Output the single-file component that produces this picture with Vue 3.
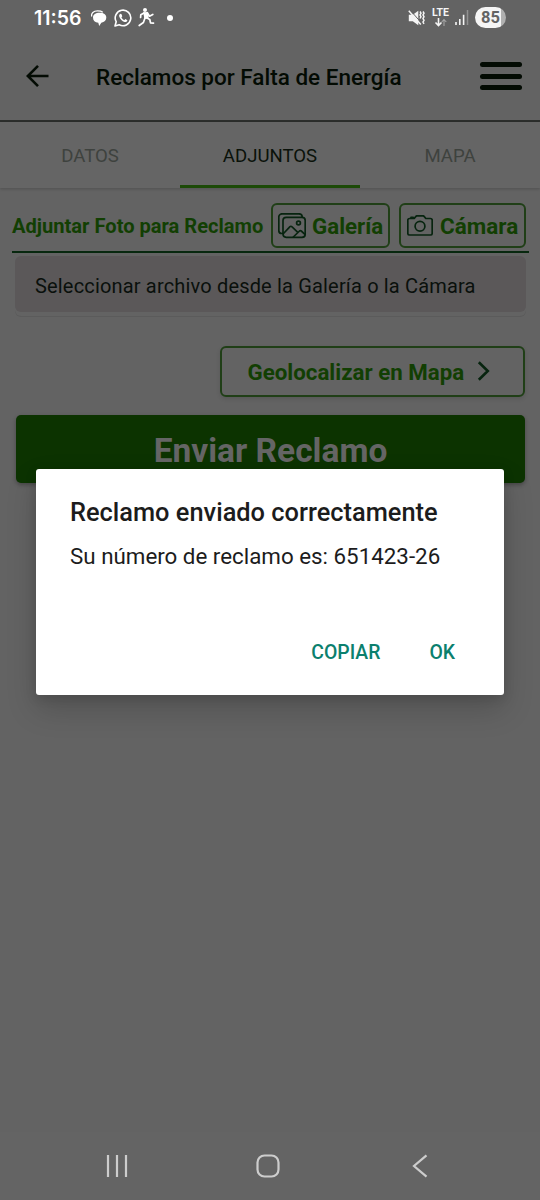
<script setup>
const tabs = [
  { label: 'DATOS', active: false },
  { label: 'ADJUNTOS', active: true },
  { label: 'MAPA', active: false },
]
</script>

<template>
  <div class="screen">
    <div class="status">
      <span class="clock">11:56</span>
      <svg class="chat" width="16" height="17" viewBox="0 0 16 17">
        <path d="M.7 6.500C0 3.300 2.500.9 6.500.9c2.600 0 4.200.4 5.300 1.300" fill="none" stroke="#fff" stroke-width="1.300" />
        <path d="M8.700 2.700c4 0 6.600 1.800 6.600 4.800 0 2.800-2 4.700-5 5.300L8.200 16l-.9-3.300C4 12.500 2 10.800 2 7.500c0-3 2.700-4.800 6.700-4.800z" fill="#fff" />
      </svg>
      <svg class="whats" width="18" height="18" viewBox="0 0 18 18">
        <path d="M1 17l1.200-4.300a7.800 7.800 0 1 1 3 3z" fill="none" stroke="#fff" stroke-width="1.600" stroke-linejoin="round" />
        <path d="M6.500 4.700c-1.200.4-1.700 1.700-1.200 3 1 2.700 2.800 4.500 5.200 5.200 1.500.4 2.700-.3 2.900-1.700l-2-1.100-1.200 1.100c-1.300-.6-2.200-1.500-2.800-2.700l.9-1.200-.9-2.300z" fill="#fff" />
      </svg>
      <svg class="run" width="17" height="19" viewBox="0 0 17 19">
        <circle cx="7" cy="2" r="2" fill="#fff" />
        <path d="M5.200 4.300l4.800-.3.700 6.500-4.300.5z" fill="#fff" />
        <path d="M6 5L2.800 6.800 2.600 9.500M9.300 4.700l2.200 3.500 3.300-1.700M8.500 9.800l3.300 1.700.7 3.300 3 .3M7 10l-1.600 4.500-4.200 3" fill="none" stroke="#fff" stroke-width="1.700" stroke-linejoin="round" stroke-linecap="round" />
      </svg>
      <i class="dot"></i>
      <span class="grow"></span>
      <svg class="mute" width="17" height="16" viewBox="0 0 17 16">
        <path d="M.8 4.800h4L10.300.8v14.400l-5.500-4h-4z" fill="#f5f5f5" />
        <path d="M2 0l12 13.500" stroke="#636363" stroke-width="1" />
        <path d="M.8 .8l12 13.700" stroke="#f5f5f5" stroke-width="1.500" />
        <path d="M12 1.500l1 1.700-1 1.800 1 1.700-1 1.800M15 1.500l1 1.700-1 1.800 1 1.700-1 1.800 1 1.800-1 1.700 1 1.800" fill="none" stroke="#f5f5f5" stroke-width="1.500" />
      </svg>
      <div class="lte">
        <span>LTE</span>
        <svg width="14" height="9" viewBox="0 0 14 9">
          <path d="M4.500 0v7M1.500 4.500l3 3 3-3" fill="none" stroke="#f5f5f5" stroke-width="1.600" />
          <path d="M10 8V1.500M7.700 4L10 1.500 12.300 4" fill="none" stroke="#a5a5a5" stroke-width="1.100" />
        </svg>
      </div>
      <svg class="signal" width="14" height="15" viewBox="0 0 14 15">
        <path d="M1 12v3M4.800 9v6M8.600 4.800V15" stroke="#f5f5f5" stroke-width="1.600" />
        <path d="M12.500 0v15" stroke="#929292" stroke-width="1.500" />
      </svg>
      <span class="battery">85</span>
    </div>

    <header class="header">
      <svg class="back" width="24" height="24" viewBox="0 0 24 24">
        <path d="M22.500 12H2M12 1.800L1.800 12 12 22.200" fill="none" stroke="#030b03" stroke-width="2.600" />
      </svg>
      <h1>Reclamos por Falta de Energía</h1>
      <div class="burger"><i></i><i></i><i></i></div>
    </header>

    <nav class="tabs">
      <div v-for="t in tabs" :key="t.label" class="tab" :class="{ active: t.active }">
        <span>{{ t.label }}</span>
      </div>
    </nav>

    <main class="content">
      <div class="attach">
        <span class="attach-label">Adjuntar Foto para Reclamo</span>
        <div class="btn gallery">
          <svg width="28" height="26" viewBox="0 0 28 26" fill="none" stroke="#07240f" stroke-width="1.700" stroke-linejoin="round" stroke-linecap="round">
            <path d="M4.500 20.500H4A3.200 3.200 0 0 1 .8 17.300V4A3.200 3.200 0 0 1 4 .8H21A3.200 3.200 0 0 1 24.200 4" />
            <rect x="5" y="4.300" width="22.200" height="20" rx="3.200" />
            <circle cx="20.500" cy="10" r="1.900" />
            <path d="M5.500 20.500l6.500-6.800c.6-.6 1.200-.6 1.800 0l5.500 5.200M15.300 24l6.200-6c.6-.5 1.200-.5 1.800 0l3.600 3.300" />
          </svg>
          <span>Galería</span>
        </div>
        <div class="btn camera">
          <svg width="26" height="21" viewBox="0 0 26 21" fill="none" stroke="#07240f" stroke-width="1.700" stroke-linejoin="round" stroke-linecap="round">
            <path d="M2.600 3.500H7.200L8.900 1.400C9.200 1 9.600.8 10.100.8h5.800c.5 0 .9.200 1.200.6l1.700 2.100h4.600c1 0 1.800.8 1.800 1.800v12.900c0 1-.8 1.800-1.800 1.800H2.600c-1 0-1.800-.8-1.800-1.800V5.300c0-1 .8-1.800 1.800-1.800z" />
            <path d="M4 3.200V2.300h2.200v.9" />
            <circle cx="13" cy="11.300" r="4.900" />
          </svg>
          <span>Cámara</span>
        </div>
      </div>
      <div class="file"><span>Seleccionar archivo desde la Galería o la Cámara</span></div>
      <div class="geo">
        <span>Geolocalizar en Mapa</span>
        <svg width="13" height="20" viewBox="0 0 13 20">
          <path d="M1.800 1.200l9 8.800-9 8.800" fill="none" stroke="#07240f" stroke-width="2.600" />
        </svg>
      </div>
      <div class="send"><span>Enviar Reclamo</span></div>
    </main>

    <footer class="navbar">
      <svg width="22" height="22" viewBox="0 0 22 22">
        <path d="M2 0v22M11 0v22M20 0v22" stroke="#cdcdcd" stroke-width="2.200" />
      </svg>
      <svg width="24" height="24" viewBox="0 0 24 24">
        <rect x="1.500" y="1.500" width="21" height="21" rx="7" fill="none" stroke="#cdcdcd" stroke-width="2.200" />
      </svg>
      <svg width="16" height="24" viewBox="0 0 16 24">
        <path d="M14.500 1.300L2 12l12.500 10.700" fill="none" stroke="#cdcdcd" stroke-width="2.200" />
      </svg>
    </footer>

    <div class="dialog">
      <h2><span>Reclamo enviado correctamente</span></h2>
      <p><span>Su número de reclamo es: 651423-26</span></p>
      <div class="actions">
        <span class="copy">COPIAR</span>
        <span class="ok">OK</span>
      </div>
    </div>
  </div>
</template>

<style>
body {
  margin: 0;
  background: #636363;
}
</style>

<style scoped>
.screen {
  position: relative;
  width: 540px;
  height: 1200px;
  overflow: hidden;
  background: #636363;
  font-family: Roboto, "Liberation Sans", sans-serif;
  display: flex;
  flex-direction: column;
}
span, h1 { white-space: nowrap; }
svg { display: block; flex: none; }
.status {
  height: 35px;
  box-sizing: border-box;
  padding: 0 34px;
  display: flex;
  align-items: center;
  color: #fff;
}
.clock { font-family: Inter, Roboto, sans-serif; font-weight: 600; font-size: 19.5px; width: 57px; padding-top: 1px; }
.chat { margin-top: 1px; }
.whats { margin-left: 7px; }
.run { margin-left: 6px; }
.dot { width: 6px; height: 6px; border-radius: 50%; background: #fff; margin-left: 12px; }
.grow { flex: 1; }
.lte { width: 17px; margin-left: 7px; display: flex; flex-direction: column; align-items: center; }
.lte span { font-size: 10.5px; line-height: 9px; font-weight: 700; color: #f5f5f5; }
.lte svg { margin-top: 1px; }
.signal { margin-left: 6px; }
.battery {
  margin-left: 6px;
  width: 31px;
  height: 21px;
  border-radius: 11px;
  background: linear-gradient(90deg, #f5f5f5 85%, #b0b0b0 85%);
  color: #636363;
  font-weight: 700;
  font-size: 16.5px;
  line-height: 22px;
  text-align: center;
}
.header {
  height: 87px;
  box-sizing: border-box;
  border-bottom: 2px solid #2c2e2c;
  padding: 0 18px 3px 26px;
  display: flex;
  align-items: center;
}
h1 {
  margin: 0 0 0 46px;
  padding-top: 2px;
  flex: 1;
  font-weight: 500;
  font-size: 22.5px;
  color: #030b03;
}
.burger { width: 42px; display: flex; flex-direction: column; gap: 6.5px; }
.burger i { height: 5px; border-radius: 3px; background: #030b03; }
.tabs {
  height: 66px;
  flex: none;
  display: flex;
  background: #656565;
  box-shadow: 0 1px 3px rgba(0, 0, 0, .2);
}
.tab {
  flex: 1;
  box-sizing: border-box;
  padding-top: 4px;
  border-bottom: 3px solid transparent;
  display: flex;
  align-items: center;
  justify-content: center;
  font-size: 18.6px;
  color: #3e423e;
}
.tab.active { color: #0a120a; border-bottom-color: #1c4a07; }
.content { flex: 1; padding: 15px 11px 0 12px; }
.attach {
  height: 50px;
  box-sizing: border-box;
  border-bottom: 2px solid #08280f;
  display: flex;
  align-items: flex-start;
}
.attach-label { width: 259px; line-height: 46px; font-weight: 700; font-size: 20.1px; color: #123f03; }
.btn {
  height: 45px;
  box-sizing: border-box;
  border: 2px solid #203f17;
  border-radius: 6px;
  display: flex;
  align-items: center;
  font-weight: 700;
  font-size: 22.3px;
  color: #123f03;
}
.gallery { width: 119px; padding-left: 5px; }
.gallery span { margin-left: 6px; }
.camera { width: 127px; margin-left: 9px; padding-left: 6px; }
.camera svg { margin-top: -1px; }
.camera span { margin-left: 7px; font-size: 22.5px; }
.file {
  margin: 3px 3px 0;
  height: 56px;
  border-radius: 6px;
  background: #5b5859;
  box-shadow: 0 4px 0 #636363, 0 5px 0 #5b5b5b;
  padding: 3px 0 0 20px;
  box-sizing: border-box;
  display: flex;
  align-items: center;
  font-size: 20px;
  letter-spacing: .17px;
  color: #0a100c;
}
.geo {
  margin: 34px 4px 0 208px;
  height: 51px;
  box-sizing: border-box;
  border: 2px solid #203f17;
  border-radius: 6px;
  padding-left: 25.5px;
  display: flex;
  align-items: center;
  font-weight: 700;
  font-size: 22.3px;
  color: #123f03;
  box-shadow: 0 2px 4px rgba(0, 0, 0, .12);
}
.geo span { padding-top: 1px; }
.geo svg { margin: -1px 0 0 13px; }
.send {
  margin: 18px 4px 0 4px;
  height: 68px;
  border-radius: 5px;
  background: #0c3300;
  box-shadow: 0 2px 4px rgba(0, 0, 0, .3);
  display: flex;
  align-items: center;
  justify-content: center;
  padding-top: 2px;
  box-sizing: border-box;
  font-weight: 700;
  font-size: 33.5px;
  color: #656565;
}
.navbar {
  height: 68px;
  flex: none;
  box-sizing: border-box;
  padding: 0 112px 0 106px;
  background: #646464;
  display: flex;
  align-items: center;
  justify-content: space-between;
}
.navbar svg:nth-child(2) { margin-right: 4px; }
.dialog {
  position: absolute;
  left: 36px;
  top: 469px;
  width: 468px;
  height: 226px;
  box-sizing: border-box;
  padding: 27px 49px 0 34px;
  border-radius: 3px;
  background: #fff;
  box-shadow: 0 14px 30px rgba(0, 0, 0, .18), 0 3px 12px rgba(0, 0, 0, .12);
  color: #1c1c1c;
}
h2 { margin: 0; font-weight: 500; font-size: 25.4px; line-height: 32px; }
p { margin: 13px 0 0; font-size: 22.35px; line-height: 30px; }
.actions {
  margin-top: 69px;
  display: flex;
  justify-content: flex-end;
  gap: 49px;
  font-weight: 500;
  font-size: 19.4px;
  line-height: 26px;
  color: #0b806e;
}
</style>
